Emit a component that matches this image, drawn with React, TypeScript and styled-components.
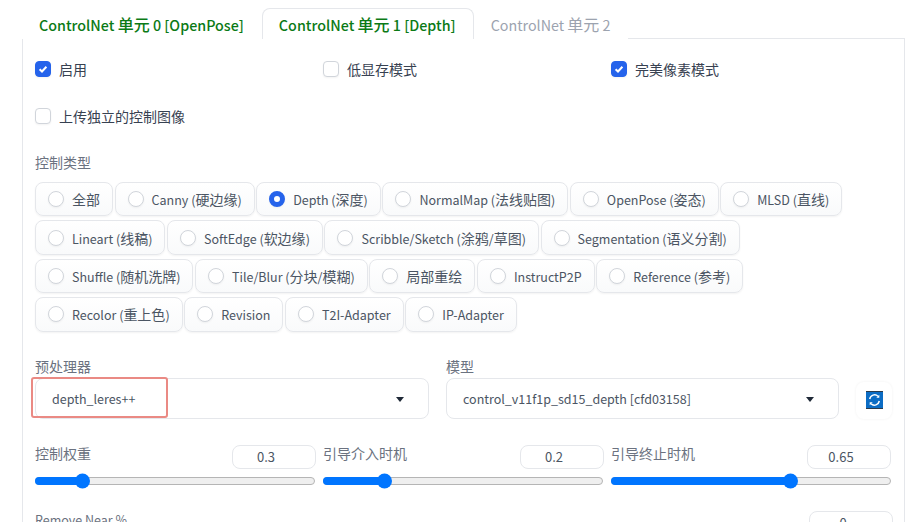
import { createGlobalStyle, styled } from "styled-components";

const GlobalStyle = createGlobalStyle`
  html, body {
    margin: 0;
    background: #fff;
    font-family: "Noto Sans CJK SC", "Noto Sans", sans-serif;
  }
`;

const Page = styled.div`
  width: 922px;
  height: 522px;
  overflow: hidden;
  padding: 8px 0 0 22px;
  box-sizing: border-box;
`;

const TabBar = styled.div`
  display: flex;
  height: 31px;
  position: relative;
  z-index: 1;
`;

const Tab = styled.div<{ $active?: boolean; $disabled?: boolean }>`
  padding: 0 17px 0 16px;
  font-size: 16px;
  line-height: 30px;
  font-weight: ${(p) => (p.$disabled ? 400 : 500)};
  color: ${(p) => (p.$disabled ? "#9ca3af" : "#0b7a16")};
  background: #fff;
  border: 1px solid ${(p) => (p.$active ? "#e5e7eb" : "transparent")};
  border-bottom: none;
  border-radius: 8px 8px 0 0;
  height: 31px;
  box-sizing: border-box;
  white-space: nowrap;
`;

const Panel = styled.div`
  width: 883px;
  height: 500px;
  box-sizing: border-box;
  border: 1px solid #e5e7eb;
  margin-top: -1px;
  padding: 6px 12px 0;
`;

const Latin = styled.span`
  font-size: 0.894em;
`;

const ThreeColumns = styled.div`
  display: grid;
  grid-template-columns: repeat(3, 280px);
  column-gap: 8px;
`;

const CheckRow = styled(ThreeColumns)`
  height: 47px;
  align-items: center;
`;

const CheckItem = styled.label`
  display: flex;
  align-items: center;
  gap: 8px;
  font-size: 14px;
  line-height: 20px;
  color: #374151;
`;

const CheckBox = styled.span<{ $checked?: boolean }>`
  width: 16px;
  height: 16px;
  box-sizing: border-box;
  border-radius: 4px;
  display: flex;
  align-items: center;
  justify-content: center;
  background: ${(p) => (p.$checked ? "#2563eb" : "#fff")};
  border: 1px solid ${(p) => (p.$checked ? "#2563eb" : "#d1d5db")};
  box-shadow: 0 1px 2px rgba(0, 0, 0, 0.05);
`;

const FieldLabel = styled.div`
  font-size: 14px;
  line-height: 20px;
  color: #6b7280;
`;

const TypeLabel = styled(FieldLabel)`
  margin-top: 13px;
  margin-bottom: 10px;
`;

const RadioGroup = styled.div`
  display: flex;
  flex-wrap: wrap;
  gap: 4px 1.6px;
  width: 857px;
`;

const Chip = styled.label`
  display: flex;
  align-items: center;
  gap: 8px;
  height: 34.4px;
  box-sizing: border-box;
  padding: 0 12px;
  border: 1px solid #e5e7eb;
  border-radius: 8px;
  background: linear-gradient(to top, #f9fafb, #fff);
  box-shadow: 0 1px 2px rgba(0, 0, 0, 0.05);
  font-size: 14px;
  color: #4b5563;
  white-space: nowrap;
`;

const RadioDot = styled.span<{ $checked?: boolean }>`
  width: 16px;
  height: 16px;
  box-sizing: border-box;
  border-radius: 50%;
  background: #fff;
  border: ${(p) => (p.$checked ? "5px solid #2563eb" : "1px solid #d1d5db")};
  box-shadow: 0 1px 2px rgba(0, 0, 0, 0.05);
`;

const DropdownRow = styled.div`
  display: grid;
  grid-template-columns: 394px 393px 36px;
  column-gap: 17px;
  margin-top: 24px;
`;

const DropdownCell = styled.div`
  display: flex;
  flex-direction: column;
`;

const Dropdown = styled.div`
  position: relative;
  height: 41px;
  margin-top: 2px;
  box-sizing: border-box;
  display: flex;
  align-items: center;
  justify-content: space-between;
  padding: 0 24px 0 16px;
  border: 1px solid #e5e7eb;
  border-radius: 8px;
  background: #fff;
  font-size: 14px;
  color: #4b5563;
`;

const Caret = styled.span`
  width: 0;
  height: 0;
  margin-top: 2px;
  border-left: 4.5px solid transparent;
  border-right: 4.5px solid transparent;
  border-top: 5px solid #1f2937;
`;

const Highlight = styled.div`
  position: absolute;
  left: -5px;
  top: -2px;
  width: 137px;
  height: 41px;
  box-sizing: border-box;
  border: 2px solid #ea8a84;
  border-radius: 3px;
  pointer-events: none;
`;

const RefreshButton = styled.button`
  align-self: end;
  width: 36px;
  height: 37px;
  margin: 0;
  padding: 0;
  border: none;
  border-radius: 8px;
  background: #fff;
  box-shadow: 0 0 3px rgba(0, 0, 0, 0.06);
  display: flex;
  align-items: center;
  justify-content: center;
`;

const SliderRow = styled(ThreeColumns)`
  margin-top: 26px;
`;

const SliderCell = styled.div`
  display: flex;
  flex-direction: column;
`;

const SliderHead = styled.div`
  display: flex;
  justify-content: space-between;
  align-items: flex-start;
  height: 32px;
`;

const SliderLabel = styled(FieldLabel)`
  margin-top: -2px;
`;

const NumberInput = styled.input`
  width: 84px;
  height: 24px;
  box-sizing: border-box;
  padding: 0 16px 0 0;
  margin-right: -1px;
  border: 1px solid #e5e7eb;
  border-radius: 8px;
  background: #fff;
  outline: none;
  text-align: center;
  font-family: inherit;
  font-size: 13px;
  color: #4b5563;

  ${SliderCell}:last-child & {
    margin-right: 0;
  }
`;

const Track = styled.div`
  position: relative;
  height: 8px;
  box-sizing: border-box;
  border: 1px solid #b5b5b5;
  border-radius: 4px;
  background: #efefef;
`;

const Fill = styled.div`
  position: absolute;
  left: -1px;
  top: -1px;
  bottom: -1px;
  border-radius: 4px 0 0 4px;
  background: #0075ff;
`;

const Thumb = styled.div`
  position: absolute;
  top: 50%;
  width: 15px;
  height: 15px;
  margin-left: -7.5px;
  transform: translateY(-50%);
  border-radius: 50%;
  background: #0075ff;
`;

const NextRow = styled(SliderHead)`
  margin-top: 26px;
`;

const CHOICES = [
  "全部",
  "Canny (硬边缘)",
  "Depth (深度)",
  "NormalMap (法线贴图)",
  "OpenPose (姿态)",
  "MLSD (直线)",
  "Lineart (线稿)",
  "SoftEdge (软边缘)",
  "Scribble/Sketch (涂鸦/草图)",
  "Segmentation (语义分割)",
  "Shuffle (随机洗牌)",
  "Tile/Blur (分块/模糊)",
  "局部重绘",
  "InstructP2P",
  "Reference (参考)",
  "Recolor (重上色)",
  "Revision",
  "T2I-Adapter",
  "IP-Adapter",
];

const SLIDERS = [
  { label: "控制权重", value: "0.3", ratio: 0.15 },
  { label: "引导介入时机", value: "0.2", ratio: 0.2 },
  { label: "引导终止时机", value: "0.65", ratio: 0.65 },
];

// latin runs come out too wide in the CJK font, so they get a smaller size
function Mixed({ text }: { text: string }) {
  const runs = text.split(/([\u4e00-\u9fff]+)/).filter(Boolean);
  return (
    <span>
      {runs.map((run, i) =>
        /[\u4e00-\u9fff]/.test(run) ? run : <Latin key={i}>{run}</Latin>,
      )}
    </span>
  );
}

function Check({ checked, children }: { checked?: boolean; children: string }) {
  return (
    <CheckItem>
      <CheckBox $checked={checked}>
        {checked && (
          <svg width="10" height="10" viewBox="0 0 10 10">
            <path d="M1.6 5.2 4 7.5 8.4 2.8" fill="none" stroke="#fff" strokeWidth="2" />
          </svg>
        )}
      </CheckBox>
      {children}
    </CheckItem>
  );
}

function Slider({ label, value, ratio }: { label: string; value: string; ratio: number }) {
  const position = `calc(7.5px + ${ratio} * (100% - 15px))`;
  return (
    <SliderCell>
      <SliderHead>
        <SliderLabel>{label}</SliderLabel>
        <NumberInput readOnly value={value} />
      </SliderHead>
      <Track>
        <Fill style={{ width: position }} />
        <Thumb style={{ left: position }} />
      </Track>
    </SliderCell>
  );
}

function RefreshIcon() {
  return (
    <svg width="17" height="18" viewBox="0 0 17 18">
      <rect width="17" height="18" fill="#0b6cc4" />
      <rect width="17" height="1" fill="#2b3a4a" />
      <rect y="17" width="17" height="1" fill="#2b3a4a" />
      <path d="M3.7 8A5 5 0 0 1 12 5.2" fill="none" stroke="#fff" strokeWidth="1.5" />
      <path d="M13.3 10A5 5 0 0 1 5 12.8" fill="none" stroke="#fff" strokeWidth="1.5" />
      <path d="M13.3 3.8v3h-3z" fill="#fff" />
      <path d="M3.7 14.2v-3h3z" fill="#fff" />
    </svg>
  );
}

export default function App() {
  return (
    <>
      <GlobalStyle />
      <Page>
        <TabBar>
          <Tab>
            <Mixed text="ControlNet 单元 0 [OpenPose]" />
          </Tab>
          <Tab $active>
            <Mixed text="ControlNet 单元 1 [Depth]" />
          </Tab>
          <Tab $disabled>
            <Mixed text="ControlNet 单元 2" />
          </Tab>
        </TabBar>
        <Panel>
          <CheckRow>
            <Check checked>启用</Check>
            <Check>低显存模式</Check>
            <Check checked>完美像素模式</Check>
          </CheckRow>
          <CheckRow>
            <Check>上传独立的控制图像</Check>
          </CheckRow>
          <TypeLabel>控制类型</TypeLabel>
          <RadioGroup>
            {CHOICES.map((choice) => (
              <Chip key={choice}>
                <RadioDot $checked={choice === "Depth (深度)"} />
                <Mixed text={choice} />
              </Chip>
            ))}
          </RadioGroup>
          <DropdownRow>
            <DropdownCell>
              <FieldLabel>预处理器</FieldLabel>
              <Dropdown>
                <Mixed text="depth_leres++" />
                <Caret />
                <Highlight />
              </Dropdown>
            </DropdownCell>
            <DropdownCell>
              <FieldLabel>模型</FieldLabel>
              <Dropdown>
                <Mixed text="control_v11f1p_sd15_depth [cfd03158]" />
                <Caret />
              </Dropdown>
            </DropdownCell>
            <RefreshButton>
              <RefreshIcon />
            </RefreshButton>
          </DropdownRow>
          <SliderRow>
            {SLIDERS.map((slider) => (
              <Slider key={slider.label} {...slider} />
            ))}
          </SliderRow>
          <NextRow>
            <SliderLabel>
              <Mixed text="Remove Near %" />
            </SliderLabel>
            <NumberInput readOnly value="0" />
          </NextRow>
        </Panel>
      </Page>
    </>
  );
}
